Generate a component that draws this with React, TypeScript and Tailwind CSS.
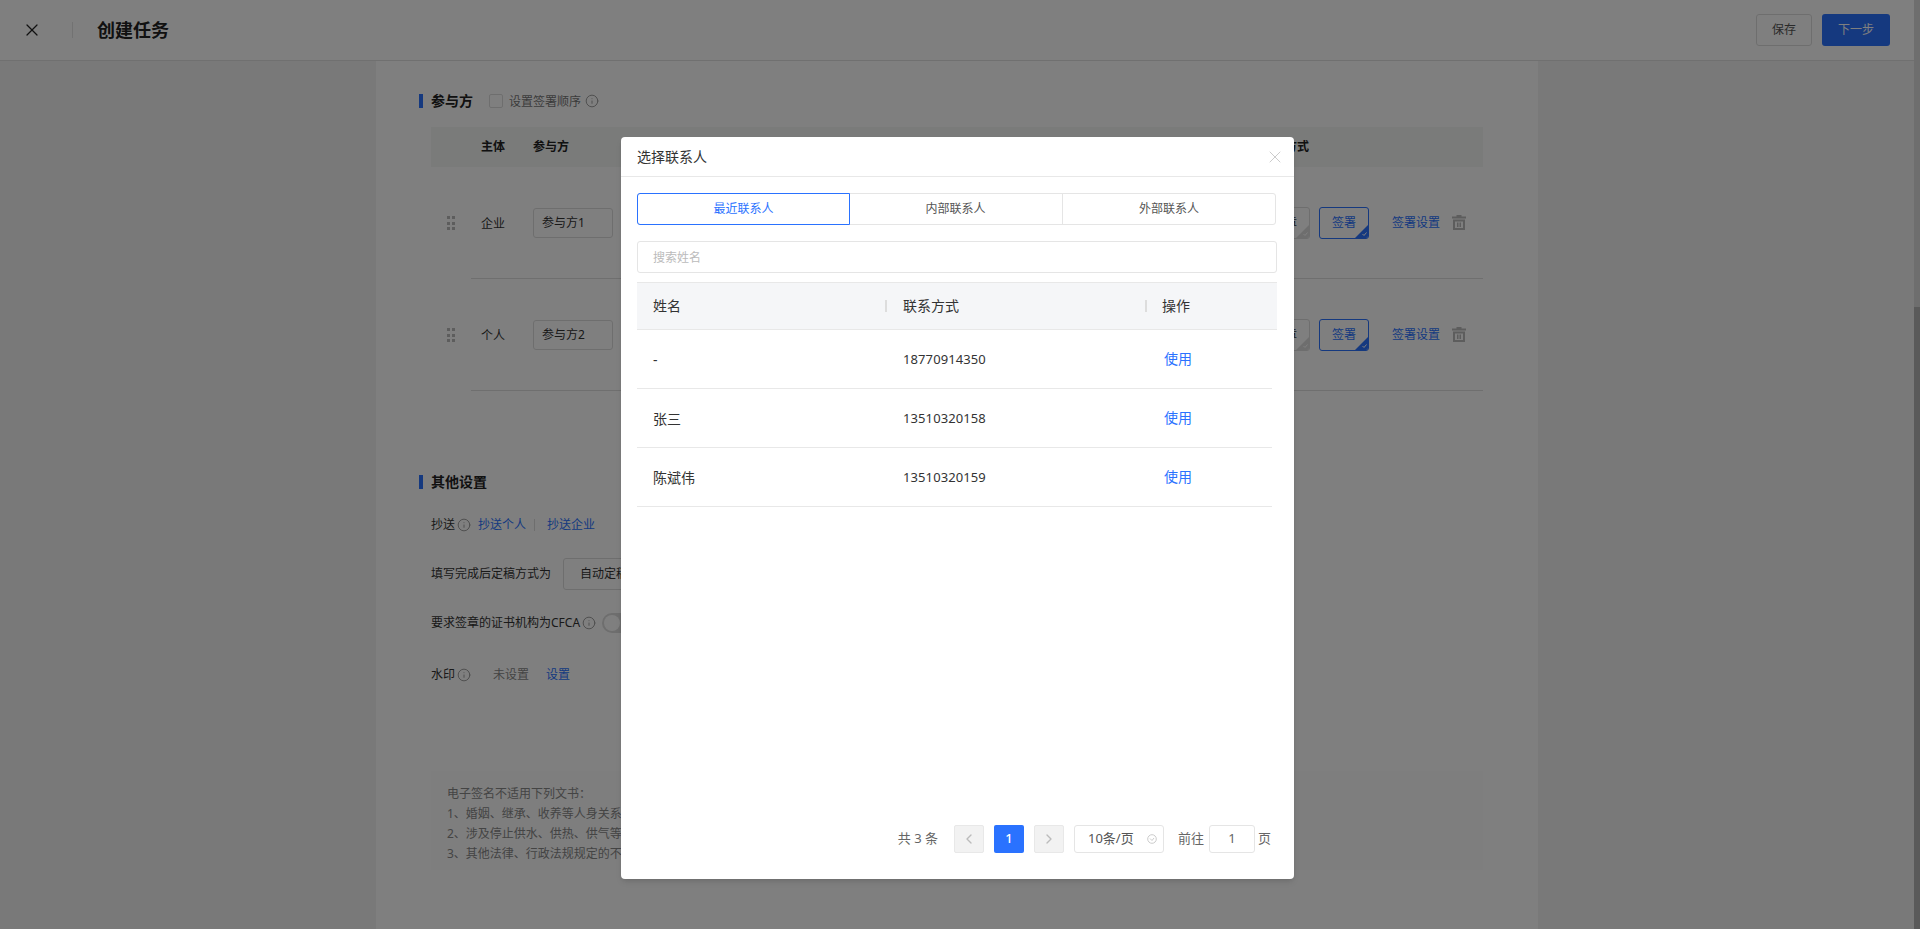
import React from 'react';
import { X, Info, ChevronLeft, ChevronRight } from 'lucide-react';

const contacts = [
  { name: '-', phone: '18770914350' },
  { name: '张三', phone: '13510320158' },
  { name: '陈斌伟', phone: '13510320159' },
];

const InfoIcon = () => <Info className="w-3.5 h-3.5 shrink-0 text-[#999]" strokeWidth={1.6} />;

function SectionTitle({ children }: { children: React.ReactNode }) {
  return (
    <div className="flex items-center h-5 gap-2">
      <span className="w-1 h-3.5 bg-[#2a72ff]" />
      <span className="text-[14px] font-bold text-[#222] pb-[2px]">{children}</span>
    </div>
  );
}

function TrashIcon() {
  return (
    <svg width="14" height="15" viewBox="0 0 14 15" className="text-[#bbb]">
      <path fill="currentColor" fillRule="evenodd" d="M4.500 0h5v1.500H14V3.500H0V1.500h4.500zM1 4.500h12V15H1zM3 6.500v6.500h8V6.500zM5 7.500h1.500v4.500H5zM7.500 7.500H9v4.500H7.500z" />
    </svg>
  );
}

function SignType({ label, active }: { label: string; active?: boolean }) {
  return (
    <div className={`relative w-[50px] h-8 rounded-[3px] border flex items-center justify-center text-[12px] overflow-hidden ${active ? 'border-[#2a72ff] text-[#2a72ff]' : 'border-[#ddd] text-[#333]'}`}>
      {label}
      <svg width="13" height="13" viewBox="0 0 13 13" className="absolute right-0 bottom-0">
        <path d="M13 0v13H0z" fill={active ? '#2a72ff' : '#ddd'} />
        <path d="M7.500 9l1.500 1.500 2.500-3" fill="none" stroke="#fff" strokeWidth="1" />
      </svg>
    </div>
  );
}

function ParticipantRow({ type, name }: { type: string; name: string }) {
  return (
    <div className="flex items-center h-[112px] pl-4">
      <div className="grid grid-cols-2 gap-x-[2px] gap-y-[2.5px] w-2 shrink-0 mr-4">
        {[0, 1, 2, 3, 4, 5].map((i) => (
          <span key={i} className="w-[3px] h-[3px] bg-[#bbb]" />
        ))}
      </div>
      <div className="flex-1 h-full flex items-center border-b border-[#dedede] pl-[10px] pr-[17px]">
        <span className="w-[52px] pt-0.5 text-[12px] text-[#333]">{type}</span>
        <div className="w-20 h-[30px] border border-[#ddd] rounded-[3px] flex items-center pl-2 text-[12px] text-[#333]">{name}</div>
        <div className="ml-auto flex items-center">
          <SignType label="盖章" />
          <div className="w-[9px]" />
          <SignType label="签署" active />
          <span className="ml-[23px] text-[12px] text-[#2a72ff]">签署设置</span>
          <span className="ml-3"><TrashIcon /></span>
        </div>
      </div>
    </div>
  );
}

function PageButton({ children, active }: { children: React.ReactNode; active?: boolean }) {
  return (
    <div className={`w-[30px] h-7 rounded-[2px] flex items-center justify-center text-[13px] font-medium ${active ? 'bg-[#2a72ff] text-white' : 'bg-[#f2f2f2] border border-[#e8e8e8] text-[#bbb]'}`}>
      {children}
    </div>
  );
}

export default function App() {
  return (
    <div className="relative h-screen overflow-hidden flex bg-[#f2f2f2] font-['Noto_Sans','Noto_Sans_CJK_SC',sans-serif]">
      <div className="flex-1 min-w-0 flex flex-col">
        <header className="h-[61px] shrink-0 bg-white border-b border-[#e0e0e0] flex items-center pl-[22px] pr-[24px]">
          <X className="w-5 h-5 text-[#222]" strokeWidth={1.5} />
          <span className="w-px h-4 bg-[#e5e5e5] ml-[30px]" />
          <h1 className="ml-6 text-[18px] font-bold text-[#222] leading-none">创建任务</h1>
          <div className="ml-auto flex items-center gap-2.5">
            <button className="w-14 h-8 rounded-[3px] border border-[#ddd] text-[12px] text-[#555]">保存</button>
            <button className="w-[68px] h-8 rounded-[3px] bg-[#2a72ff] text-[12px] text-white">下一步</button>
          </div>
        </header>

        <main className="w-[1162px] mx-auto flex-1 bg-white pl-[43px] pr-[55px] pt-[30px]">
          <div className="flex items-center">
            <SectionTitle>参与方</SectionTitle>
            <span className="ml-4 w-[14px] h-[14px] border border-[#ddd] rounded-[2px]" />
            <span className="ml-1.5 pt-[2px] text-[12px] text-[#777]">设置签署顺序</span>
            <span className="ml-1"><InfoIcon /></span>
          </div>

          <div className="ml-3 mt-4">
            <div className="h-10 bg-[#f4f7f5] flex items-center pl-[50px] text-[12px] font-bold text-[#222]">
              <span className="w-[52px]">主体</span>
              <span>参与方</span>
              <span className="ml-[692px]">签署方式</span>
            </div>
            <ParticipantRow type="企业" name="参与方1" />
            <ParticipantRow type="个人" name="参与方2" />
          </div>

          <div className="mt-[81px]">
            <SectionTitle>其他设置</SectionTitle>
          </div>

          <div className="ml-3 text-[12px] text-[#333]">
            <div className="flex items-center h-8 mt-[17px]">
              <span>抄送</span>
              <span className="ml-[2px]"><InfoIcon /></span>
              <span className="ml-[7px] text-[#2a72ff]">抄送个人</span>
              <span className="mx-2 w-px h-3 bg-[#ddd]" />
              <span className="ml-1 text-[#2a72ff]">抄送企业</span>
            </div>
            <div className="flex items-center h-8 mt-[17px]">
              <span>填写完成后定稿方式为</span>
              <div className="ml-3 w-[120px] h-8 border border-[#ddd] rounded-[3px] flex items-center pl-4">自动定稿</div>
            </div>
            <div className="flex items-center h-8 mt-[17px]">
              <span>要求签章的证书机构为CFCA</span>
              <span className="ml-[2px]"><InfoIcon /></span>
              <span className="ml-[6px] w-10 h-5 rounded-full bg-[#dcdcdc] p-0.5">
                <span className="block w-4 h-4 rounded-full bg-white" />
              </span>
            </div>
            <div className="flex items-center h-8 mt-5">
              <span>水印</span>
              <span className="ml-[2px]"><InfoIcon /></span>
              <span className="ml-[22px] text-[#888]">未设置</span>
              <span className="ml-[17px] text-[#2a72ff]">设置</span>
            </div>
            <div className="mt-20 h-[99px] bg-[#fcfcfc] pl-4 pt-[13px] leading-5 text-[#888]">
              <p>电子签名不适用下列文书：</p>
              <p>1、婚姻、继承、收养等人身关系的文书；</p>
              <p>2、涉及停止供水、供热、供气等公用事业服务的文书；</p>
              <p>3、其他法律、行政法规规定的不适用电子文书的情形。</p>
            </div>
          </div>
        </main>
      </div>
      {/* Scrollbar */}
      <div className="w-1.5 shrink-0 bg-[#dcdcdc] flex flex-col">
        <div className="h-[307px]" />
        <div className="flex-1 bg-[#b4b4b4]" />
      </div>

      {/* Dialog overlay */}
      <div className="absolute inset-0 bg-black/50 pr-[5px] pt-[137px] flex justify-center items-start">
        <div className="w-[673px] h-[742px] bg-white rounded-[4px] flex flex-col shadow-md">
          <div className="h-10 shrink-0 border-b border-[#e8e8e8] flex items-center justify-between pl-4 pr-[9px]">
            <span className="text-[14px] text-[#333]">选择联系人</span>
            <X className="w-5 h-5 text-[#ccc]" strokeWidth={1.2} />
          </div>

          <div className="flex-1 flex flex-col pl-4 pr-[17px] pt-4">
            <div className="flex h-8 w-[639px] text-[12px] text-[#555] border border-[#e5e5e5] rounded-[3px]">
              <div className="w-[213px] -m-px border border-[#2a72ff] rounded-l-[3px] text-[#2a72ff] flex items-center justify-center">最近联系人</div>
              <div className="w-[214px] flex items-center justify-center border-r border-[#e5e5e5]">内部联系人</div>
              <div className="flex-1 flex items-center justify-center">外部联系人</div>
            </div>

            <div className="mt-4 h-8 border border-[#e5e5e5] rounded-[3px] flex items-center pl-[15px] pt-0.5 text-[12px] text-[#bbb]">搜索姓名</div>

            <div className="mt-[9px] h-12 bg-[#f5f6f8] border-y border-[#e8e8e8] flex items-center text-[14px] text-[#333]">
              <div className="w-[250px] pl-4 flex items-center justify-between">
                <span className="pb-0.5">姓名</span>
                <span className="w-0.5 h-3 bg-[#ddd]" />
              </div>
              <div className="w-[260px] pl-4 flex items-center justify-between">
                <span className="pb-0.5">联系方式</span>
                <span className="w-0.5 h-3 bg-[#ddd]" />
              </div>
              <div className="pl-[15px] pb-0.5">操作</div>
            </div>

            {contacts.map((c) => (
              <div key={c.phone} className="h-[59px] w-[635px] shrink-0 border-b border-[#e8e8e8] flex items-center text-[14px] text-[#333]">
                <div className="w-[266px] pl-4">{c.name}</div>
                <div className="w-[261px] pt-0.5 text-[13px] tracking-[0.1px]">{c.phone}</div>
                <div className="pb-0.5 text-[#2a72ff]">使用</div>
              </div>
            ))}

            <div className="mt-auto mb-[26px] flex items-center justify-end text-[13px] text-[#666] pr-[6px]">
              <span className="mr-4">共 3 条</span>
              <PageButton><ChevronLeft className="w-4 h-4" strokeWidth={2} /></PageButton>
              <span className="w-2.5" />
              <PageButton active>1</PageButton>
              <span className="w-2.5" />
              <PageButton><ChevronRight className="w-4 h-4" strokeWidth={2} /></PageButton>
              <div className="ml-2.5 w-[90px] h-7 border border-[#e5e5e5] rounded-[3px] flex items-center justify-between pl-[13px] pr-[6px] text-[#555]">
                <span>10条/页</span>
                <svg width="10" height="10" viewBox="0 0 10 10" fill="none" stroke="#ccc"><circle cx="5" cy="5" r="4.300" /><path d="M3 4.500l2 2 2-2.500" /></svg>
              </div>
              <span className="ml-[14px]">前往</span>
              <div className="ml-[5px] w-[46px] h-7 border border-[#e5e5e5] rounded-[3px] flex items-center justify-center">1</div>
              <span className="ml-[3px]">页</span>
            </div>
          </div>
        </div>
      </div>
    </div>
  );
}
